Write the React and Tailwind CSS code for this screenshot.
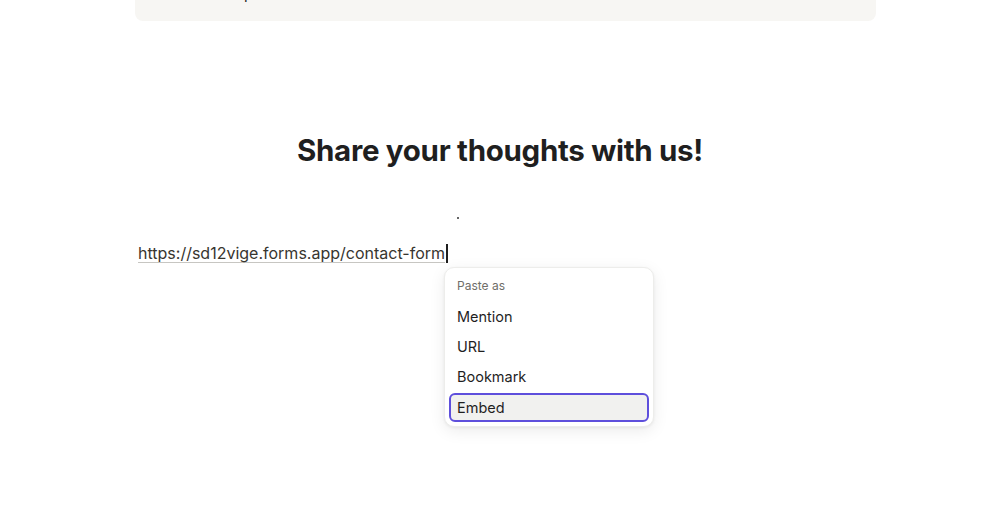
import React from 'react';

const ITEMS = ['Mention', 'URL', 'Bookmark', 'Embed'];

function PasteMenu() {
  return (
    <div className="absolute left-[306px] top-[26px] w-[210px] rounded-[10px] bg-white border border-[#ededeb] shadow-[0_4px_16px_rgba(15,15,15,0.08),0_1px_3px_rgba(15,15,15,0.06)] px-[4px] pt-[8px] pb-[4px]">
      <p className="px-[8px] text-[12px] leading-[20px] text-[#6f6e69] mb-[6px]">Paste as</p>
      {ITEMS.map(item => (
        <div
          key={item}
          className={
            item === 'Embed'
              ? 'mt-[1px] h-[29px] flex items-center px-[6px] rounded-[6px] bg-[#f1f1ef] border-2 border-[#5e4fdc] text-[14.5px] text-[#1f1f1f]'
              : 'h-[30px] flex items-center px-[8px] text-[14.5px] text-[#1f1f1f]'
          }
        >
          {item}
        </div>
      ))}
    </div>
  );
}

export default function App() {
  return (
    <div className="w-[1000px] h-[516px] bg-white overflow-hidden" style={{ fontFamily: 'Inter, "Noto Sans", sans-serif' }}>
      <div className="ml-[135px] w-[741px] h-[21px] bg-[#f7f6f3] rounded-b-[8px] overflow-hidden">
        <p className="ml-[109px] -mt-[15px] text-[15px] leading-[18px] text-[#1f1f1f]">p</p>
      </div>

      <h1 className="mt-[110px] text-center text-[29.5px] leading-[38px] font-bold tracking-[-0.01em] text-[#1f1f1f]">
        Share your thoughts with us!
      </h1>

      <div className="ml-[457px] mt-[48px] w-[2px] h-[2px] rounded-full bg-[#333]" />

      <div className="relative ml-[138px] mt-[22px] w-fit">
        <div className="flex items-center h-[24px]">
          <span className="text-[16px] leading-[24px] text-[#37352f] underline decoration-[#c7c6c2] underline-offset-[3px]">
            https://sd12vige.forms.app/contact-form
          </span>
          <span className="w-[1.5px] h-[19px] bg-[#1f1f1f] ml-[1px]" />
        </div>
        <PasteMenu />
      </div>
    </div>
  );
}
